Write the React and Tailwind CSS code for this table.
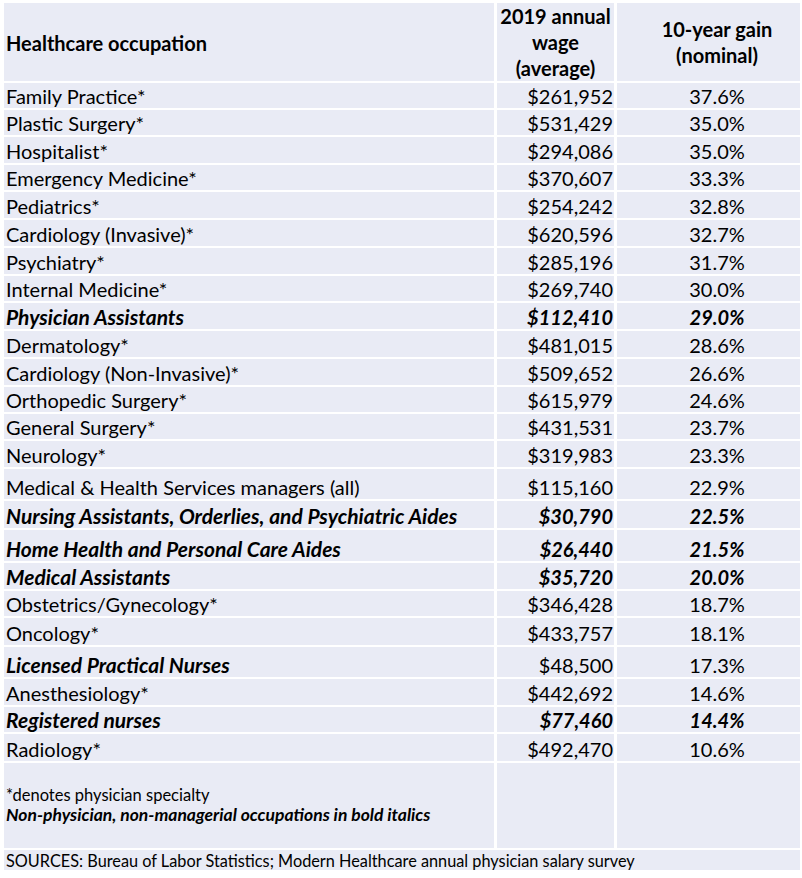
import React from "react";

const rows = [
  ["Family Practice*", "$261,952", "37.6%", 0],
  ["Plastic Surgery*", "$531,429", "35.0%", 0],
  ["Hospitalist*", "$294,086", "35.0%", 0],
  ["Emergency Medicine*", "$370,607", "33.3%", 0],
  ["Pediatrics*", "$254,242", "32.8%", 0],
  ["Cardiology (Invasive)*", "$620,596", "32.7%", 0],
  ["Psychiatry*", "$285,196", "31.7%", 0],
  ["Internal Medicine*", "$269,740", "30.0%", 0],
  ["Physician Assistants", "$112,410", "29.0%", 2],
  ["Dermatology*", "$481,015", "28.6%", 0],
  ["Cardiology (Non-Invasive)*", "$509,652", "26.6%", 0],
  ["Orthopedic Surgery*", "$615,979", "24.6%", 0],
  ["General Surgery*", "$431,531", "23.7%", 0],
  ["Neurology*", "$319,983", "23.3%", 0],
  ["Medical & Health Services managers (all)", "$115,160", "22.9%", 0],
  ["Nursing Assistants, Orderlies, and Psychiatric Aides", "$30,790", "22.5%", 2],
  ["Home Health and Personal Care Aides", "$26,440", "21.5%", 2],
  ["Medical Assistants", "$35,720", "20.0%", 2],
  ["Obstetrics/Gynecology*", "$346,428", "18.7%", 0],
  ["Oncology*", "$433,757", "18.1%", 0],
  ["Licensed Practical Nurses", "$48,500", "17.3%", 1],
  ["Anesthesiology*", "$442,692", "14.6%", 0],
  ["Registered nurses", "$77,460", "14.4%", 2],
  ["Radiology*", "$492,470", "10.6%", 0],
];

const cell = "bg-[#e9ebf5] flex items-end pb-[1px] leading-[22px] whitespace-nowrap";

export default function App() {
  return (
    <div className="w-[802px] h-[878px] bg-white pt-[3px] pl-[4px] text-black font-['Lato',sans-serif] text-[20px] overflow-hidden">
      <div className="grid grid-cols-[490px_117px_183px] grid-rows-[78px_25px_25px_26px_25px_26px_26px_26px_25px_26px_26px_26px_25px_25px_26px_30px_27px_31px_26px_25px_27px_30px_26px_25px_27px_85px_20px] gap-x-[3px] gap-y-[2px]">
        <div className="bg-[#e9ebf5] flex items-center pl-[2px] pt-[2px] font-bold">Healthcare occupation</div>
        <div className="bg-[#e9ebf5] flex items-center justify-center text-center font-bold leading-[26px] whitespace-nowrap">
          2019 annual
          <br />
          wage
          <br />
          (average)
        </div>
        <div className="bg-[#e9ebf5] flex items-center justify-center text-center font-bold leading-[26px] pl-[17px] whitespace-nowrap">
          10-year gain
          <br />
          (nominal)
        </div>
        {rows.map(([name, wage, gain, style]) => (
          <React.Fragment key={name}>
            <div className={`${cell} pl-[2px] ${style > 0 ? "font-bold italic text-[21px]" : ""}`}>{name}</div>
            <div className={`${cell} justify-end pr-[1px] ${style === 2 ? "font-bold italic" : ""}`}>{wage}</div>
            <div className={`${cell} justify-center pl-[17px] ${style === 2 ? "font-bold italic" : ""}`}>{gain}</div>
          </React.Fragment>
        ))}
        <div className="bg-[#e9ebf5] flex flex-col justify-center pl-[2px] leading-[19px] pb-[2px] whitespace-nowrap">
          <div className="text-[16.5px]">*denotes physician specialty</div>
          <div className="text-[17.5px] font-bold italic">Non-physician, non-managerial occupations in bold italics</div>
        </div>
        <div className="bg-[#e9ebf5]" />
        <div className="bg-[#e9ebf5]" />
        <div className="col-span-3 bg-[#e9ebf5] pl-[2px] text-[16.3px] leading-[22px] whitespace-nowrap">
          SOURCES: Bureau of Labor Statistics; Modern Healthcare annual physician salary survey
        </div>
      </div>
    </div>
  );
}
